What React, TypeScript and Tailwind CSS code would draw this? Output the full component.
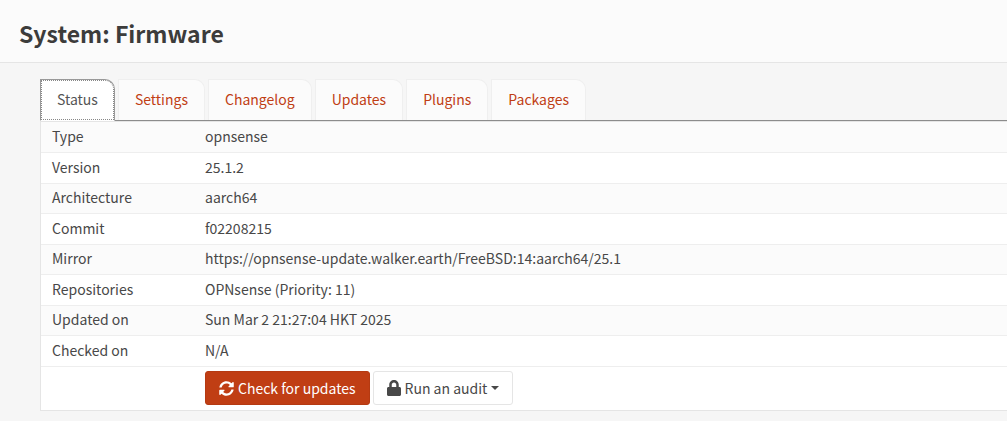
import { FaLock, FaSyncAlt } from "react-icons/fa";

const tabs = ["Status", "Settings", "Changelog", "Updates", "Plugins", "Packages"];

const details = [
  ["Type", "opnsense"],
  ["Version", "25.1.2"],
  ["Architecture", "aarch64"],
  ["Commit", "f02208215"],
  ["Mirror", "https://opnsense-update.walker.earth/FreeBSD:14:aarch64/25.1"],
  ["Repositories", "OPNsense (Priority: 11)"],
  ["Updated on", "Sun Mar 2 21:27:04 HKT 2025"],
  ["Checked on", "N/A"],
];

function Tabs() {
  return (
    <nav aria-label="Firmware" className="flex items-end gap-[3px] border-b border-[#8c8c8c]">
      {tabs.map((tab, i) => (
        <a
          key={tab}
          href={"#" + tab.toLowerCase()}
          aria-current={i === 0 ? "page" : undefined}
          className={
            i === 0
              ? "relative -mb-px h-[42px] rounded-tr-[10px] border border-[#999] border-b-white bg-white px-4 leading-[39px] text-[#555] after:absolute after:inset-0 after:rounded-tr-[9px] after:border after:border-dotted after:border-[#888]"
              : "h-[41px] rounded-tr-[10px] border border-b-0 border-[#efefef] bg-[#fbfbfb] px-4 leading-[39px] text-[#c03e14]"
          }
        >
          {tab}
        </a>
      ))}
    </nav>
  );
}

export default function App() {
  return (
    <div className="flex min-h-screen flex-col bg-[#f6f6f6] font-['Noto_Sans_CJK_SC',sans-serif] text-sm text-[#484848]">
      <header className="border-b border-[#e5e5e5] bg-[#fbfbfb] px-[19px] pt-[15px] pb-[11px]">
        <h1 className="text-[23px] leading-9 font-bold text-[#3c3c3b]">System: Firmware</h1>
      </header>
      <main className="pt-4 pb-[10px] pl-10">
        <Tabs />
        <div className="border-y border-l border-[#e5e5e5] bg-white">
          <table className="w-full border-collapse text-left">
            <tbody>
              {details.map(([label, value]) => (
                <tr key={label} className="border-b border-[#eeeeee] odd:h-[30px] odd:bg-[#fbfbfb] even:h-[31px]">
                  <th scope="row" className="w-[152px] p-0 pb-[2px] pl-[11px] leading-6 font-normal">
                    {label}
                  </th>
                  <td className="p-0 pb-[2px] pl-3 leading-6">{value}</td>
                </tr>
              ))}
              <tr className="h-[44px]">
                <td />
                <td className="p-0 pl-3">
                  <div className="flex gap-[3px]">
                    <button
                      type="button"
                      className="flex h-[34px] items-center gap-1 rounded-[3px] border border-[#b53a12] bg-[#c03e14] px-[13px] text-white"
                    >
                      <FaSyncAlt className="size-[15px]" aria-hidden="true" />
                      Check for updates
                    </button>
                    <button
                      type="button"
                      aria-haspopup="menu"
                      className="flex h-[34px] items-center gap-1 rounded-[3px] border border-[#e5e5e5] bg-white px-[13px]"
                    >
                      <FaLock className="h-4 w-[14px]" aria-hidden="true" />
                      Run an audit
                      <svg viewBox="0 0 8 4" className="h-1 w-2 fill-current" aria-hidden="true">
                        <path d="M0 0h8L4 4z" />
                      </svg>
                    </button>
                  </div>
                </td>
              </tr>
            </tbody>
          </table>
        </div>
      </main>
    </div>
  );
}
